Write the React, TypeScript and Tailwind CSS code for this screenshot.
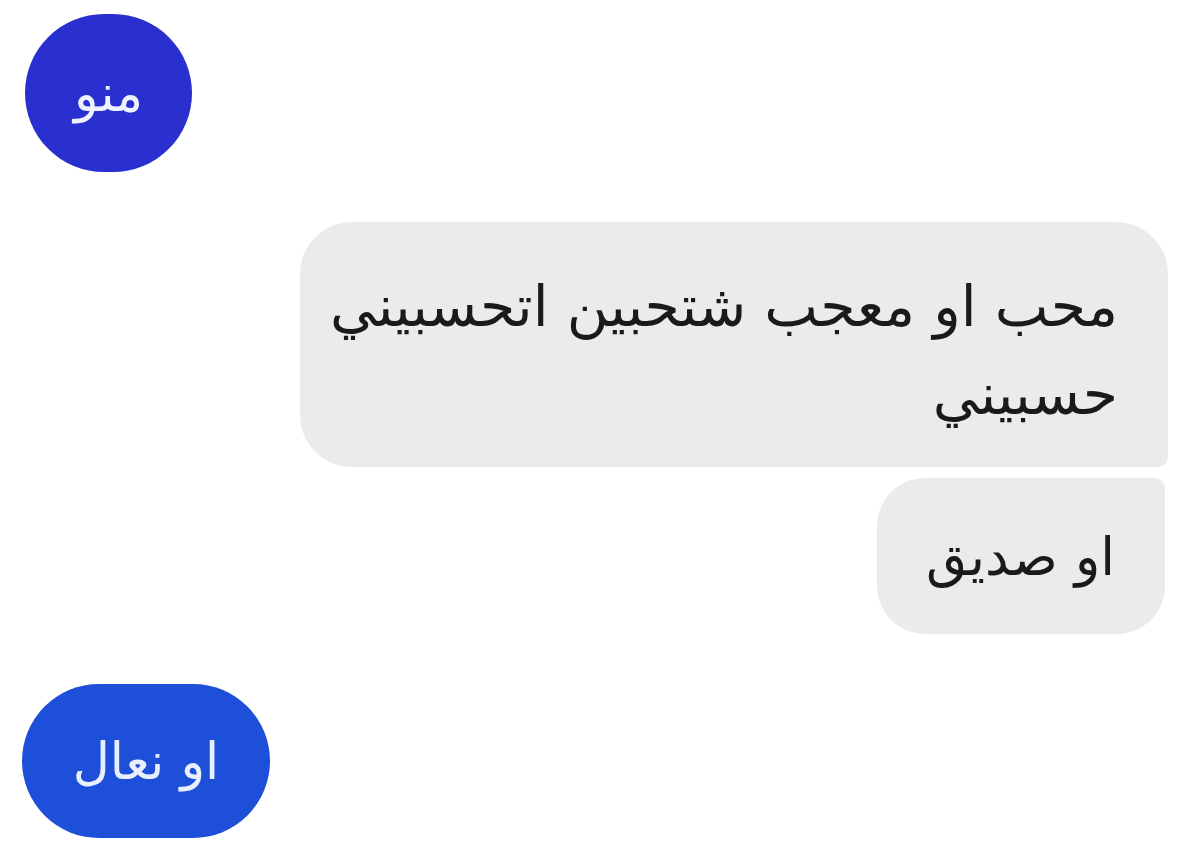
export default function App() {
  const arabic = { fontFamily: '"DejaVu Sans", sans-serif' };
  return (
    <div className="w-[1199px] h-[850px] bg-white overflow-hidden" style={arabic}>
      <div className="flex flex-col pt-[14px]">
        {/* incoming */}
        <div className="ml-[25px] w-[167px] h-[158px] rounded-full bg-[#2a30cf] flex items-center justify-center">
          <span dir="rtl" className="text-[#eef1ff] text-[51px] leading-none">منو</span>
        </div>

        {/* outgoing group */}
        <div className="flex flex-col items-end mr-[31px] mt-[50px] gap-[11px]">
          <div className="w-[868px] h-[245px] bg-[#ebebed] rounded-[52px] rounded-br-[10px] pl-[20px] pr-[50px] pt-[40px]">
            <p dir="rtl" className="text-[#1a1a1a] text-[57px] leading-[88px]">
              محب او معجب شتحبين اتحسبيني حسبيني
            </p>
          </div>
          <div className="w-[288px] h-[156px] bg-[#ebebed] rounded-[48px] rounded-tr-[10px] flex items-center justify-end pr-[50px] mr-[3px]">
            <span dir="rtl" className="text-[#1a1a1a] text-[53px] leading-none">او صديق</span>
          </div>
        </div>

        <div className="ml-[22px] mt-[50px] w-[248px] h-[154px] rounded-full bg-[#1e4fd9] flex items-center justify-center">
          <span dir="rtl" className="text-[#e8efff] text-[51px] leading-none">او نعال</span>
        </div>
      </div>
    </div>
  );
}
